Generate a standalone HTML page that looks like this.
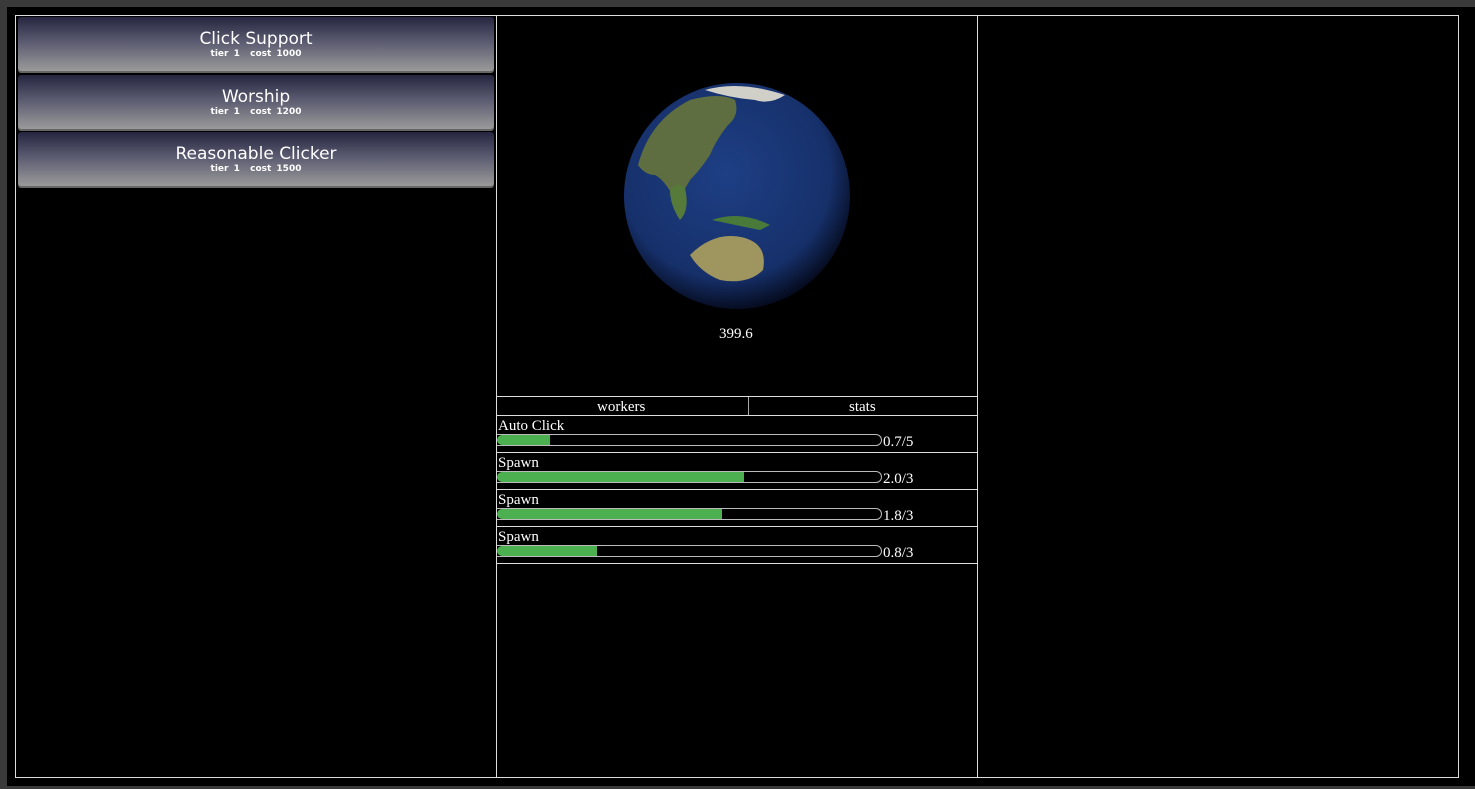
<!DOCTYPE html>
<html><head><style>
body{margin:0;width:1475px;height:789px;background:#3a3a3a;position:relative;overflow:hidden;font-family:"Liberation Serif",serif;color:#fff}
.page{position:absolute;left:7px;top:7px;width:1468px;height:779px;background:#000}
.frame{position:absolute;left:15px;top:15px;width:1442px;height:761px;border:1px solid #ddd}
.vl{position:absolute;top:15px;width:1px;height:763px;background:#ddd}
.btn{position:absolute;left:18px;width:476px;height:54px;border-radius:3px;background:linear-gradient(#25253f,#5a5a70 45%,#9a9a9a);box-shadow:0 2px 0 #666;text-align:center;font-family:"DejaVu Sans",sans-serif}
.btn .t{font-size:17px;padding-top:13px;line-height:19px}
.btn .s{font-size:9px;font-weight:bold;line-height:10px;word-spacing:2px}
.hl{position:absolute;left:497px;width:480px;height:1px;background:#ddd}
.lbl{position:absolute;left:498px;font-size:15px;line-height:16px;top:1px}
.bar{position:absolute;left:497px;width:384px;height:10px;border:1px solid #bbb;border-radius:0 6px 6px 0/0 6px 6px 0;border-left:none}
.bar i{display:block;height:100%;background:#4caf50;border-radius:5px 0 0 5px}
.val{position:absolute;left:883px;font-size:15px;margin-top:1px}
</style></head><body>
<div class="page"></div>
<div class="frame"></div>
<div class="vl" style="left:496px"></div>
<div class="vl" style="left:977px"></div>
<div class="btn" style="top:17px"><div class="t">Click Support</div><div class="s">tier 1 &nbsp;cost 1000</div></div>
<div class="btn" style="top:75px"><div class="t">Worship</div><div class="s">tier 1 &nbsp;cost 1200</div></div>
<div class="btn" style="top:132px"><div class="t">Reasonable Clicker</div><div class="s">tier 1 &nbsp;cost 1500</div></div>
<svg style="position:absolute;left:620px;top:80px" width="235" height="235">
<defs><radialGradient id="g" cx="45%" cy="40%" r="62%"><stop offset="0" stop-color="#1e3f85"/><stop offset="0.75" stop-color="#16306a"/><stop offset="1" stop-color="#040818"/></radialGradient></defs>
<circle cx="117" cy="116" r="113" fill="url(#g)"/>
<path d="M18 85 Q30 40 70 20 Q100 12 115 20 Q120 35 108 45 Q96 60 90 75 Q80 90 70 100 Q62 115 55 120 Q45 100 35 95 Q25 95 18 85Z" fill="#5e6e40"/>
<path d="M85 10 Q120 0 165 15 Q150 25 135 20 Q110 18 85 10Z" fill="#d0d0c8"/>
<path d="M50 110 Q58 100 65 108 Q70 130 60 140 Q50 125 50 110Z" fill="#567a3a"/>
<path d="M70 175 Q95 150 125 158 Q148 165 143 190 Q128 205 100 200 Q80 192 70 175Z" fill="#9f955f"/>
<path d="M92 140 Q120 130 150 145 L140 150 Q115 145 92 140Z" fill="#4a7a3a"/>
</svg>
<div style="position:absolute;left:719px;top:326px;font-size:15px">399.6</div>
<div class="hl" style="top:396px"></div>
<div class="hl" style="top:415px"></div>
<div style="position:absolute;left:748px;top:397px;width:1px;height:18px;background:#aaa"></div>
<div style="position:absolute;left:597px;top:399px;font-size:15px">workers</div>
<div style="position:absolute;left:849px;top:399px;font-size:15px">stats</div>
<div class="lbl" style="top:418px">Auto Click</div><div class="bar" style="top:434px"><i style="width:53px"></i></div><div class="val" style="top:433px">0.7/5</div>
<div class="hl" style="top:452px"></div>
<div class="lbl" style="top:455px">Spawn</div><div class="bar" style="top:471px"><i style="width:247px"></i></div><div class="val" style="top:470px">2.0/3</div>
<div class="hl" style="top:489px"></div>
<div class="lbl" style="top:492px">Spawn</div><div class="bar" style="top:508px"><i style="width:225px"></i></div><div class="val" style="top:507px">1.8/3</div>
<div class="hl" style="top:526px"></div>
<div class="lbl" style="top:529px">Spawn</div><div class="bar" style="top:545px"><i style="width:100px"></i></div><div class="val" style="top:544px">0.8/3</div>
<div class="hl" style="top:563px"></div>
</body></html>
